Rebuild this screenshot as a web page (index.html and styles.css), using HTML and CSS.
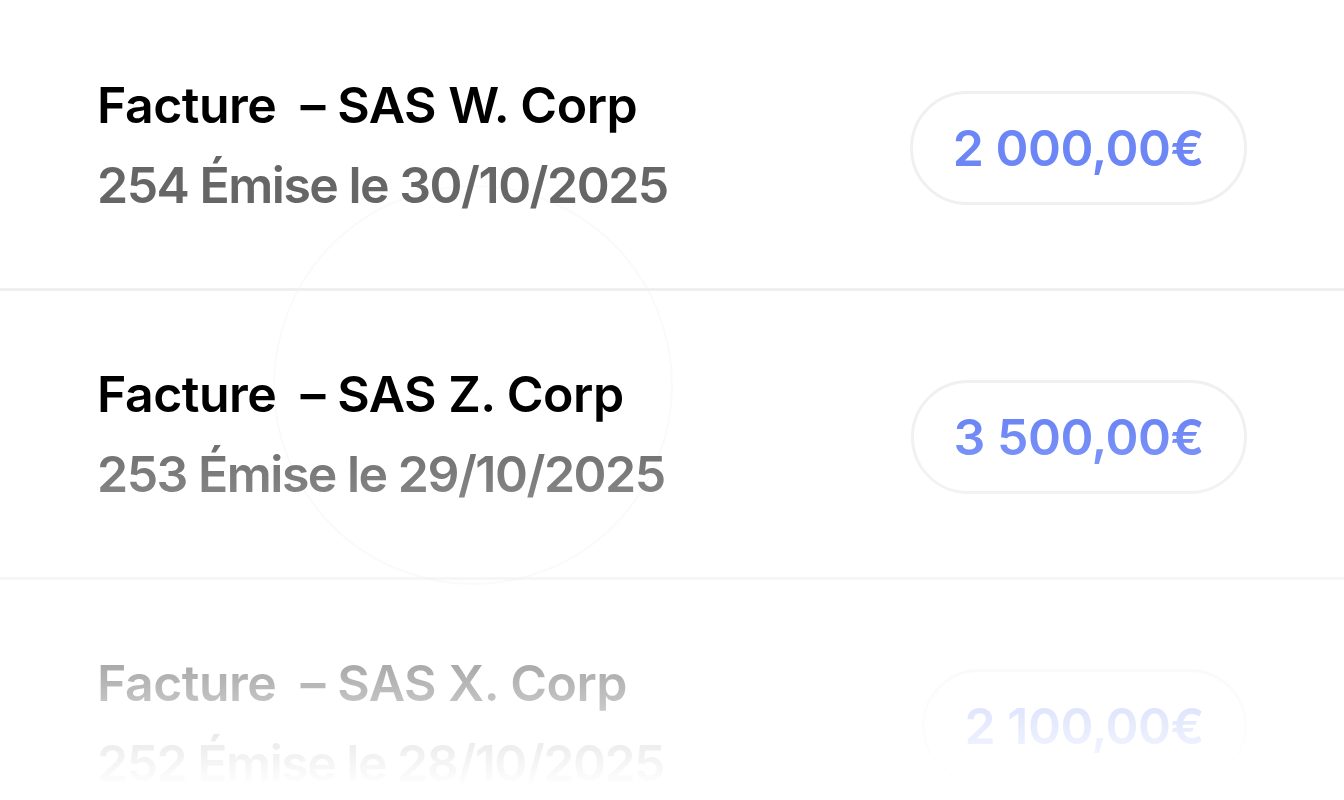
FILE: index.html
```html
<!DOCTYPE html>
<html lang="fr">
<head>
<meta charset="utf-8">
<title>Factures</title>
<link rel="stylesheet" href="styles.css">
</head>
<body>
<main class="viewport">
  <div class="halo" aria-hidden="true"></div>
  <ul class="invoice-list">
    <li class="invoice">
      <div class="invoice-info">
        <span class="invoice-title">Facture&nbsp; – SAS W. Corp</span>
        <span class="invoice-meta">254 Émise le 30/10/2025</span>
      </div>
      <span class="amount">2 000,00€</span>
    </li>
    <li class="invoice">
      <div class="invoice-info">
        <span class="invoice-title">Facture&nbsp; – SAS Z. Corp</span>
        <span class="invoice-meta">253 Émise le 29/10/2025</span>
      </div>
      <span class="amount">3 500,00€</span>
    </li>
    <li class="invoice">
      <div class="invoice-info">
        <span class="invoice-title">Facture&nbsp; – SAS X. Corp</span>
        <span class="invoice-meta">252 Émise le 28/10/2025</span>
      </div>
      <span class="amount">2 100,00€</span>
    </li>
  </ul>
</main>
</body>
</html>
```
FILE: styles.css
```css
html, body {
  margin: 0;
  padding: 0;
  background: #ffffff;
}

body {
  font-family: "Inter", "Liberation Sans", sans-serif;
  -webkit-font-smoothing: antialiased;
}

.viewport {
  position: relative;
  width: 1344px;
  height: 800px;
  overflow: hidden;
}

.halo {
  position: absolute;
  left: 273px;
  top: 185px;
  width: 400px;
  height: 400px;
  border-radius: 50%;
  border: 2px solid rgba(0, 30, 30, 0.022);
  box-sizing: border-box;
  pointer-events: none;
}

.invoice-list {
  list-style: none;
  margin: 2px 0 0;
  padding: 0;
  -webkit-mask-image: linear-gradient(to bottom, #000 0, #000 420px, transparent 785px);
  mask-image: linear-gradient(to bottom, #000 0, #000 420px, transparent 785px);
}

.invoice {
  display: flex;
  align-items: center;
  justify-content: space-between;
  box-sizing: border-box;
  height: 289px;
  padding: 6px 97px 0 97px;
  border-bottom: 3px solid #efefef;
}

.invoice-info {
  display: flex;
  flex-direction: column;
  gap: 30px;
  margin-bottom: 6px;
}

.invoice-title,
.invoice-meta {
  font-size: 50px;
  line-height: 1;
  font-weight: 600;
  white-space: nowrap;
}

.invoice-title {
  color: #000000;
  letter-spacing: -0.01em;
}

.invoice-meta {
  color: #666666;
  letter-spacing: -0.03em;
}

.amount {
  display: inline-flex;
  align-items: center;
  justify-content: center;
  box-sizing: border-box;
  height: 114px;
  padding: 0 40px;
  border: 3px solid #f0f0f0;
  border-radius: 57px;
  font-size: 50px;
  font-weight: 600;
  color: #6c86f6;
  letter-spacing: -0.01em;
  white-space: nowrap;
}
```
